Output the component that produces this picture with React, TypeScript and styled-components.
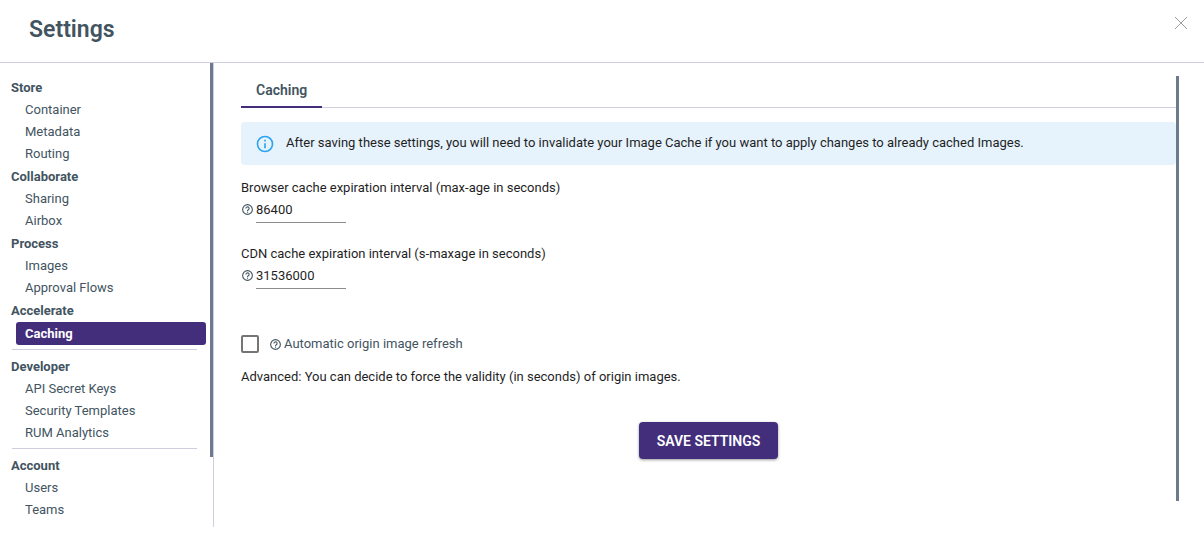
import React from "react";
import styled, { createGlobalStyle } from "styled-components";

const color = {
  brand: "#432e7b",
  slate: "#42545f",
  ink: "#1f1f1f",
  line: "#cfcde0",
  thumb: "#6b7a8d",
  infoBg: "#e6f3fc",
  info: "#2aa3f2",
};

const GlobalStyle = createGlobalStyle`
  *, *::before, *::after { box-sizing: border-box; }
  body {
    margin: 0;
    background: #fff;
    color: ${color.ink};
    font-family: Roboto, "Liberation Sans", sans-serif;
    font-size: 13px;
    line-height: 20px;
  }
`;

const Page = styled.div`
  display: flex;
  flex-direction: column;
  min-height: 100vh;
  padding-bottom: 10px;
`;

const Header = styled.header`
  display: flex;
  align-items: flex-start;
  justify-content: space-between;
  height: 63px;
  padding: 14px 14px 0 29px;
  border-bottom: 1px solid ${color.line};
`;

const Title = styled.h1`
  margin: 0;
  color: ${color.slate};
  font-size: 23px;
  font-weight: 600;
  line-height: 32px;
`;

const CloseButton = styled.button`
  display: flex;
  padding: 1px;
  border: 0;
  background: none;
  color: #9a9da3;
  cursor: pointer;
`;

const Body = styled.div`
  display: flex;
  flex: 1;
`;

const Sidebar = styled.nav`
  position: relative;
  flex: 0 0 214px;
  padding: 13px 7px 0 11px;
  border-right: 1px solid ${color.line};
`;

const ScrollThumb = styled.div<{ $top: number; $right: number; $length: string }>`
  position: absolute;
  top: ${(p) => p.$top}px;
  right: ${(p) => p.$right}px;
  width: 3px;
  height: ${(p) => p.$length};
  background: ${color.thumb};
`;

const GroupTitle = styled.h2`
  margin: 0;
  color: ${color.slate};
  font-size: 13px;
  font-weight: 700;
  line-height: 23px;
`;

const LinkList = styled.ul`
  margin: 0;
  padding: 0 0 0 5px;
  list-style: none;
`;

const NavLink = styled.a<{ $active?: boolean }>`
  display: block;
  padding-left: 9px;
  border-radius: 3px;
  background: ${(p) => (p.$active ? color.brand : "transparent")};
  color: ${(p) => (p.$active ? "#fff" : color.slate)};
  font-weight: ${(p) => (p.$active ? 700 : 400)};
  line-height: ${(p) => (p.$active ? 23 : 22)}px;
  text-decoration: none;
`;

const Divider = styled.hr`
  height: 1px;
  margin: 4px 9px 5px 1px;
  border: 0;
  background: ${color.line};
`;

const Main = styled.main`
  position: relative;
  flex: 1;
  min-width: 0;
  padding: 13px 28px 0 27px;
`;

const TabList = styled.div`
  display: flex;
  height: 32px;
  border-bottom: 1px solid ${color.line};
`;

const Tab = styled.button`
  height: 32px;
  padding: 0 15px 2px;
  border: 0;
  border-bottom: 2px solid ${color.brand};
  background: none;
  color: ${color.slate};
  font: 600 14px/28px Roboto, "Liberation Sans", sans-serif;
  cursor: pointer;
`;

const Notice = styled.div`
  display: flex;
  align-items: center;
  gap: 11px;
  min-height: 43px;
  margin-top: 14px;
  padding: 0 14px;
  border-radius: 4px;
  background: ${color.infoBg};
`;

const NoticeText = styled.p`
  margin: 0;
  padding-bottom: 2px;
`;

const Form = styled.form`
  display: flex;
  flex-direction: column;
  padding-top: 13px;
`;

const Field = styled.div`
  margin-bottom: 21px;
`;

const FieldLabel = styled.label`
  display: block;
`;

const InputRow = styled.div`
  display: flex;
  align-items: center;
  gap: 3px;
  padding-left: 1px;
  color: ${color.slate};

  svg {
    margin-bottom: 2px;
  }
`;

const NumberInput = styled.input`
  width: 90px;
  height: 25px;
  padding: 0 0 1px;
  border: 0;
  border-bottom: 1px solid #8c8c8c;
  background: none;
  color: ${color.ink};
  font: 400 13px/20px Roboto, "Liberation Sans", sans-serif;
`;

const CheckRow = styled.label`
  display: flex;
  align-items: center;
  gap: 11px;
  margin: 24px 0 13px;
  color: ${color.slate};
`;

const Checkbox = styled.input`
  appearance: none;
  width: 18px;
  height: 18px;
  margin: 0;
  border: 2px solid #757575;
  border-radius: 2px;

  &:checked {
    border-color: ${color.brand};
    background: ${color.brand};
  }
`;

const CheckText = styled.span`
  display: flex;
  align-items: center;
  gap: 3px;
`;

const Note = styled.p`
  margin: 0;
`;

const SaveButton = styled.button`
  align-self: center;
  height: 37px;
  margin-top: 35px;
  padding: 0 18px;
  border: 0;
  border-radius: 4px;
  background: ${color.brand};
  box-shadow: 0 1px 3px rgba(0, 0, 0, 0.4);
  color: #fff;
  font: 600 14px/20px Roboto, "Liberation Sans", sans-serif;
  text-transform: uppercase;
  cursor: pointer;
`;

const HelpIcon = () => (
  <svg width="11" height="11" viewBox="0 0 24 24" fill="none" stroke="currentColor" strokeWidth="2.4" aria-hidden="true">
    <circle cx="12" cy="12" r="10.6" />
    <path d="M8.5 9.8a3.5 3.5 0 1 1 5.4 2.9c-1.2.8-1.9 1.3-1.9 2.3" />
    <path d="M12 16.6v2.4" />
  </svg>
);

const InfoIcon = () => (
  <svg width="20" height="20" viewBox="0 0 24 24" fill={color.info} aria-hidden="true">
    <path d="M11 9h2V7h-2zm1 11c-4.41 0-8-3.59-8-8s3.59-8 8-8 8 3.59 8 8-3.59 8-8 8zm0-18a10 10 0 1 0 0 20 10 10 0 0 0 0-20zm-1 15h2v-6h-2z" />
  </svg>
);

const CloseIcon = () => (
  <svg width="16" height="16" viewBox="0 0 16 16" fill="none" stroke="currentColor" aria-hidden="true">
    <path d="M2 2l12 12M14 2L2 14" />
  </svg>
);

type Group = { title: string; links: string[]; divided?: boolean };

const groups: Group[] = [
  { title: "Store", links: ["Container", "Metadata", "Routing"] },
  { title: "Collaborate", links: ["Sharing", "Airbox"] },
  { title: "Process", links: ["Images", "Approval Flows"] },
  { title: "Accelerate", links: ["Caching"], divided: true },
  { title: "Developer", links: ["API Secret Keys", "Security Templates", "RUM Analytics"], divided: true },
  { title: "Account", links: ["Users", "Teams"] },
];

const fields = [
  { id: "max-age", label: "Browser cache expiration interval (max-age in seconds)", value: "86400" },
  { id: "s-maxage", label: "CDN cache expiration interval (s-maxage in seconds)", value: "31536000" },
];

export default function App() {
  return (
    <Page>
      <GlobalStyle />
      <Header>
        <Title>Settings</Title>
        <CloseButton type="button" aria-label="Close">
          <CloseIcon />
        </CloseButton>
      </Header>
      <Body>
        <Sidebar>
          {groups.map((group) => (
            <section key={group.title}>
              <GroupTitle>{group.title}</GroupTitle>
              <LinkList>
                {group.links.map((link) => (
                  <li key={link}>
                    <NavLink href="#" $active={link === "Caching"}>
                      {link}
                    </NavLink>
                  </li>
                ))}
              </LinkList>
              {group.divided && <Divider />}
            </section>
          ))}
          <ScrollThumb $top={0} $right={0} $length="85%" />
        </Sidebar>
        <Main>
          <TabList role="tablist">
            <Tab type="button" role="tab" aria-selected="true">
              Caching
            </Tab>
          </TabList>
          <Notice>
            <InfoIcon />
            <NoticeText>
              After saving these settings, you will need to invalidate your Image Cache if you want to apply changes to
              already cached Images.
            </NoticeText>
          </Notice>
          <Form onSubmit={(e) => e.preventDefault()}>
            {fields.map((field) => (
              <Field key={field.id}>
                <FieldLabel htmlFor={field.id}>{field.label}</FieldLabel>
                <InputRow>
                  <HelpIcon />
                  <NumberInput id={field.id} type="text" inputMode="numeric" defaultValue={field.value} />
                </InputRow>
              </Field>
            ))}
            <CheckRow>
              <Checkbox type="checkbox" />
              <CheckText>
                <HelpIcon />
                Automatic origin image refresh
              </CheckText>
            </CheckRow>
            <Note>Advanced: You can decide to force the validity (in seconds) of origin images.</Note>
            <SaveButton type="submit">Save settings</SaveButton>
          </Form>
          <ScrollThumb $top={13} $right={25} $length="calc(92% - 2px)" />
        </Main>
      </Body>
    </Page>
  );
}
